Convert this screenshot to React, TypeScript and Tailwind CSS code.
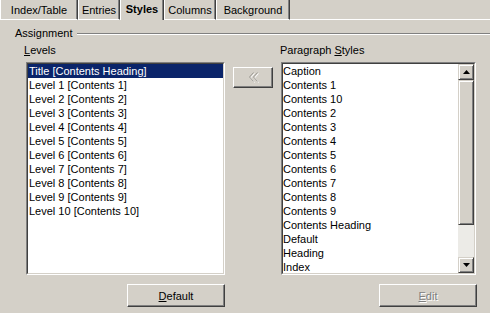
import React from "react";

const raised =
  "border border-t-white border-l-white border-r-[#404040] border-b-[#404040] shadow-[inset_-1px_-1px_#808080]";
const raisedSb =
  "border border-t-[#d4d0c8] border-l-[#d4d0c8] border-r-[#404040] border-b-[#404040] shadow-[inset_1px_1px_#ffffff,inset_-1px_-1px_#808080]";

function Tab({ w, label, selected }: { w: string; label: string; selected?: boolean }) {
  if (selected) {
    return (
      <div
        className={`${w} h-[20px] shrink-0 border-l border-l-white border-r border-r-[#404040] shadow-[inset_-1px_0_#808080] text-center pt-[2px] font-bold`}
      >
        {label}
      </div>
    );
  }
  return (
    <div
      className={`${w} h-[20px] shrink-0 border-l border-l-white border-r border-r-[#404040] border-b border-b-white shadow-[inset_-1px_0_#808080] text-center pt-[3px]`}
    >
      {label}
    </div>
  );
}

const levels = [
  "Title [Contents Heading]",
  "Level 1 [Contents 1]",
  "Level 2 [Contents 2]",
  "Level 3 [Contents 3]",
  "Level 4 [Contents 4]",
  "Level 5 [Contents 5]",
  "Level 6 [Contents 6]",
  "Level 7 [Contents 7]",
  "Level 8 [Contents 8]",
  "Level 9 [Contents 9]",
  "Level 10 [Contents 10]",
];

const styles = [
  "Caption",
  "Contents 1",
  "Contents 10",
  "Contents 2",
  "Contents 3",
  "Contents 4",
  "Contents 5",
  "Contents 6",
  "Contents 7",
  "Contents 8",
  "Contents 9",
  "Contents Heading",
  "Default",
  "Heading",
  "Index",
];

function Sunken({ className, children }: { className: string; children: React.ReactNode }) {
  return (
    <div
      className={`${className} border border-t-[#808080] border-l-[#808080] border-r-white border-b-white`}
    >
      <div className="w-full h-full border border-t-[#404040] border-l-[#404040] border-r-[#d4d0c8] border-b-[#d4d0c8] bg-white overflow-hidden">
        {children}
      </div>
    </div>
  );
}

export default function App() {
  return (
    <div className="w-[490px] h-[313px] bg-[#d4d0c8] text-[11px] leading-[14px] text-black overflow-hidden font-['Liberation_Sans',Arial,sans-serif] flex flex-col">
      {/* Tabs */}
      <div className="flex h-[20px] shrink-0">
        <Tab w="w-[78px]" label="Index/Table" />
        <Tab w="w-[42px]" label="Entries" />
        <Tab w="w-[44px]" label="Styles" selected />
        <Tab w="w-[52px]" label="Columns" />
        <Tab w="w-[74px]" label="Background" />
        <div className="flex-1 h-[20px] border-b border-b-white" />
      </div>

      {/* Assignment */}
      <div className="flex h-[14px] mt-[6px]">
        <span className="ml-[15px]">Assignment</span>
        <div className="flex-1 ml-[5px] mt-[7px] h-[2px] border-t border-t-[#808080] border-b border-b-white" />
      </div>

      {/* Main */}
      <div className="flex mt-[3px]">
        <div className="flex flex-col pl-[24px]">
          <span className="h-[14px]">
            <span className="underline">L</span>evels
          </span>
          <Sunken className="ml-[2px] mt-[5px] w-[199px] h-[213px]">
            <div className="flex flex-col">
              {levels.map((l, i) => (
                <div
                  key={l}
                  className={`h-[14px] pl-[1px] whitespace-nowrap ${
                    i === 0 ? "bg-[#0a246a] text-white" : ""
                  }`}
                >
                  {l}
                </div>
              ))}
            </div>
          </Sunken>
        </div>

        <div className="ml-[8px] mt-[24px]">
          <div className={`w-[40px] h-[21px] flex items-center justify-center ${raised}`}>
            <svg width="11" height="11" viewBox="0 0 11 11">
              <polyline points="5.5,0.5 1.5,5 5.5,9.5" fill="none" stroke="#ffffff" strokeWidth="1" transform="translate(1,1)" />
              <polyline points="9.5,0.5 5.5,5 9.5,9.5" fill="none" stroke="#ffffff" strokeWidth="1" transform="translate(1,1)" />
              <polyline points="5.5,0.5 1.5,5 5.5,9.5" fill="none" stroke="#9c9a94" strokeWidth="1" />
              <polyline points="9.5,0.5 5.5,5 9.5,9.5" fill="none" stroke="#9c9a94" strokeWidth="1" />
            </svg>
          </div>
        </div>

        <div className="flex flex-col ml-[7px]">
          <span className="h-[14px]">
            Paragraph <span className="underline">S</span>tyles
          </span>
          <Sunken className="ml-[1px] mt-[5px] w-[195px] h-[213px]">
            <div className="flex h-full">
              <div className="flex-1 flex flex-col overflow-hidden">
                {styles.map((s) => (
                  <div key={s} className="h-[14px] shrink-0 whitespace-nowrap">
                    {s}
                  </div>
                ))}
              </div>
              <div className="w-[16px] h-full flex flex-col bg-[#d4d0c8]">
                <div className={`h-[16px] shrink-0 flex items-center justify-center ${raisedSb}`}>
                  <svg width="7" height="4" viewBox="0 0 7 4">
                    <polygon points="3.5,0 7,4 0,4" fill="#000" />
                  </svg>
                </div>
                <div className={`h-[145px] shrink-0 ${raisedSb}`} />
                <div className="flex-1 bg-[#ecebe7]" />
                <div className={`h-[16px] shrink-0 flex items-center justify-center ${raisedSb}`}>
                  <svg width="7" height="4" viewBox="0 0 7 4">
                    <polygon points="0,0 7,0 3.5,4" fill="#000" />
                  </svg>
                </div>
              </div>
            </div>
          </Sunken>
        </div>
      </div>

      {/* Buttons */}
      <div className="flex mt-[9px] pl-[127px]">
        <div className={`w-[98px] h-[23px] flex items-center justify-center ${raised}`}>
          <span>
            <span className="underline">D</span>efault
          </span>
        </div>
        <div className={`ml-[154px] w-[98px] h-[23px] flex items-center justify-center ${raised}`}>
          <span className="text-[#808080] [text-shadow:1px_1px_0_#ffffff]">
            <span className="underline">E</span>dit
          </span>
        </div>
      </div>
    </div>
  );
}
